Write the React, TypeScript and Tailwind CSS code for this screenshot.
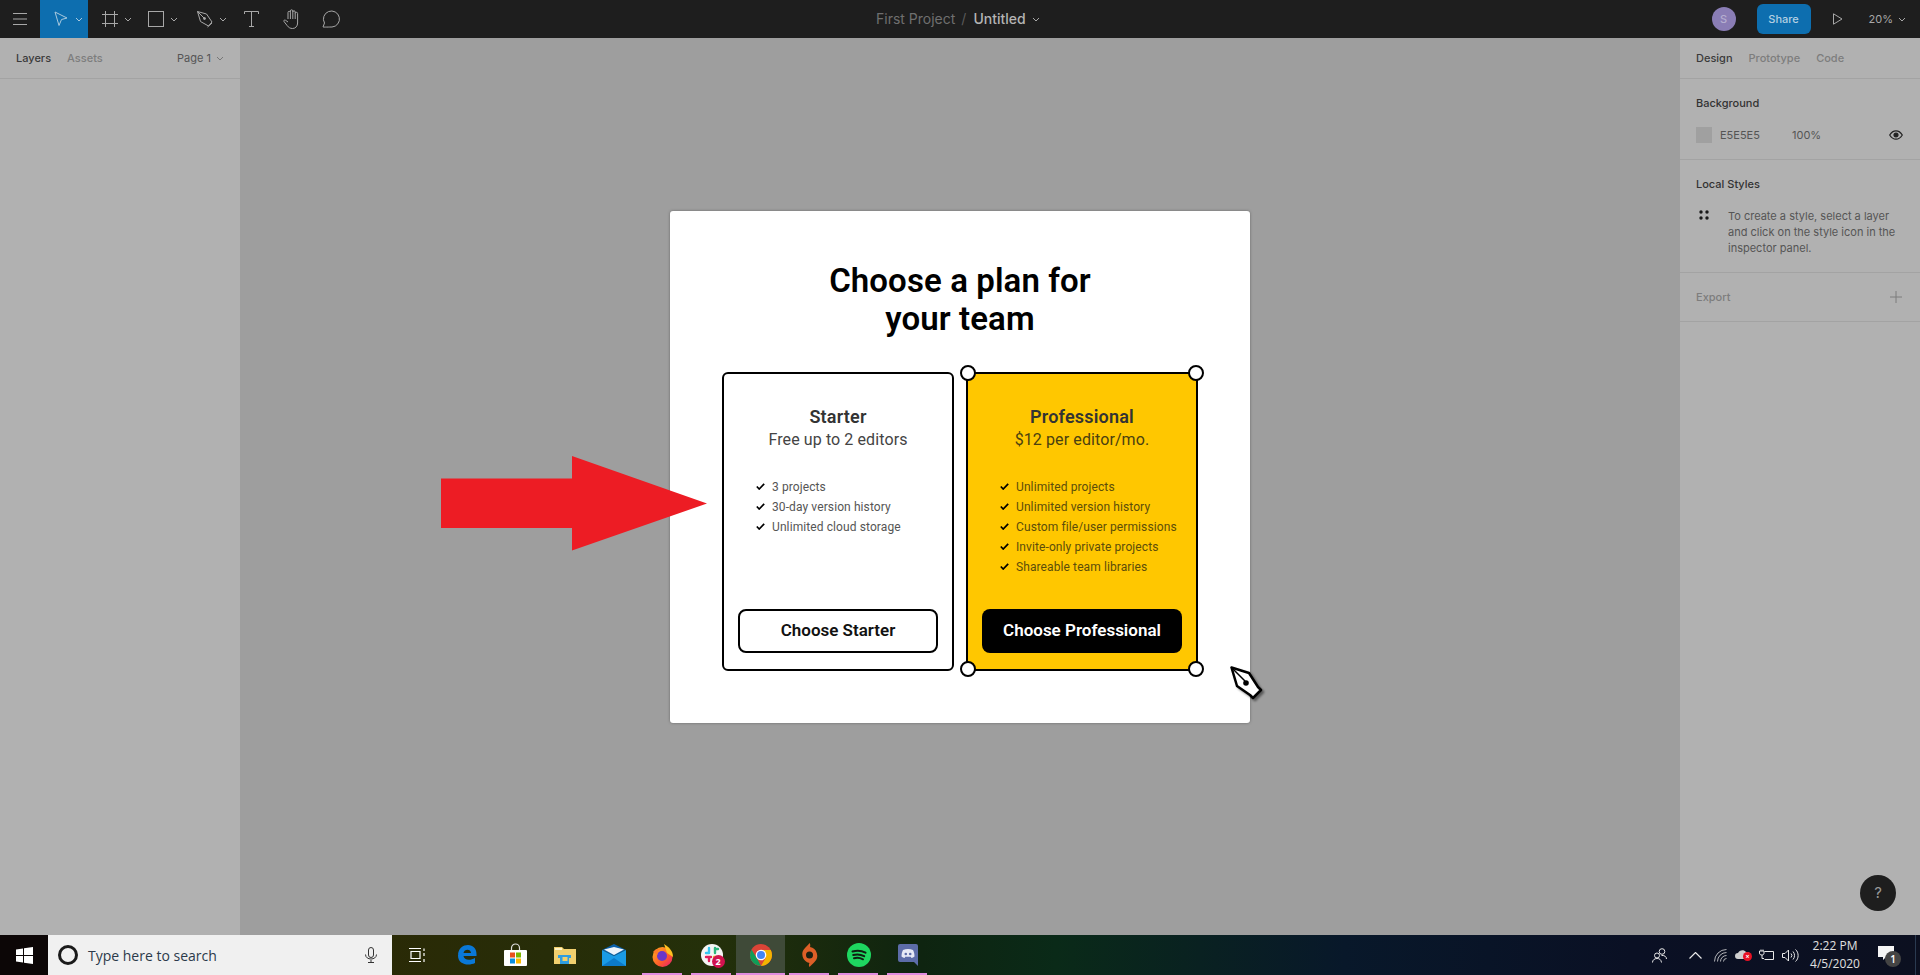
import React from "react";

const Chev = ({ c = "#a8a8a8", cls = "" }: { c?: string; cls?: string }) => (
  <svg width="8" height="5" viewBox="0 0 8 5" className={cls} fill="none">
    <path d="M1 1l3 3 3-3" stroke={c} strokeWidth="1" />
  </svg>
);

const TopBar = () => (
  <div className="h-[38px] bg-[#1e1e1e] flex items-center relative shrink-0 [font-family:Inter,sans-serif]">
    <div className="w-[40px] h-full flex items-center justify-center">
      <svg width="14" height="12" viewBox="0 0 14 12" fill="none" stroke="#a8a8a8"><path d="M0 .5h14M0 6h14M0 11.5h14" /></svg>
    </div>
    <div className="w-[48px] h-full bg-[#0d6eaf] flex items-center justify-center gap-[7px] pl-[8px]">
      <svg width="14" height="16" viewBox="0 0 14 16" fill="none" stroke="#a9c9de"><path d="M1 1l12 6-5.5 1.500L5 14.500z" /></svg>
      <Chev c="#a9c9de" />
    </div>
    <div className="w-[48px] h-full flex items-center justify-center gap-[6px] ml-[2px] pl-[6px]">
      <svg width="16" height="16" viewBox="0 0 16 16" fill="none" stroke="#a8a8a8"><path d="M3.500 0v16M12.500 0v16M0 3.500h16M0 12.500h16" /></svg>
      <Chev />
    </div>
    <div className="w-[48px] h-full flex items-center justify-center gap-[6px] pl-[2px]">
      <svg width="16" height="16" viewBox="0 0 16 16" fill="none" stroke="#a8a8a8"><rect x=".5" y=".5" width="15" height="15" /></svg>
      <Chev />
    </div>
    <div className="w-[48px] h-full flex items-center justify-center gap-[6px] pl-[4px]">
      <svg width="16" height="17" viewBox="0 0 16 17" fill="none" stroke="#a8a8a8"><path d="M.5.500l9 2.500 5.500 8-3.500 4-8-4.500zM.5.500l6.500 6.500" /><circle cx="7.500" cy="7.500" r="1" fill="#a8a8a8" /><path d="M10.500 16l4.500-4" /></svg>
      <Chev />
    </div>
    <div className="w-[40px] h-full flex items-center justify-center pr-[5px]">
      <svg width="15" height="16" viewBox="0 0 15 16" fill="none" stroke="#a8a8a8"><path d="M.5 3V.500h14V3M7.500.500v15M5 15.500h5" /></svg>
    </div>
    <div className="w-[38px] h-full flex items-center justify-center pr-[3px]">
      <svg width="18" height="20" viewBox="0 0 18 20" fill="none" stroke="#a8a8a8"><path d="M5 10V3.500a1.200 1.200 0 012.400 0V2a1.200 1.200 0 012.400 0v1a1.200 1.200 0 012.400 0v1.500a1.200 1.200 0 012.400 0V14c0 3-2 5.500-5 5.500-2.500 0-4-1-5.500-3L1 12.500c-.6-1 .6-2 1.600-1.200L5 13M7.400 3.500V10M9.800 3v7M12.200 4.500V10" /></svg>
    </div>
    <div className="w-[40px] h-full flex items-center justify-center pr-[2px]">
      <svg width="18" height="18" viewBox="0 0 18 18" fill="none" stroke="#a8a8a8"><path d="M1 17l1.500-4A8 8 0 1110 17c-2 0-9 .200-9 0z" /></svg>
    </div>
    <div className="absolute left-[876px] top-0 h-full flex items-center text-[14px] pb-[2px]">
      <span className="text-[#6f6f6f]">First Project</span>
      <span className="text-[#5a5a5a] ml-[6px] mr-[7px]">/</span>
      <span className="text-[#b4b4b4] font-medium">Untitled</span>
      <Chev cls="ml-[6px] mt-[2px]" />
    </div>
    <div className="ml-auto h-full flex items-center">
      <div className="w-[24px] h-[24px] rounded-full bg-[#8a7db5] text-[#b5aed0] text-[11px] font-medium flex items-center justify-center">S</div>
      <div className="w-[54px] h-[30px] ml-[21px] rounded-[6px] bg-[#0d6eaf] text-[#b3cfe2] text-[11px] font-medium flex items-center justify-center">Share</div>
      <svg width="10" height="12" viewBox="0 0 10 12" fill="none" stroke="#a8a8a8" className="ml-[22px]"><path d="M.5.800v10.400l8.500-5.200z" /></svg>
      <span className="text-[11px] text-[#a8a8a8] ml-[26px]">20%</span>
      <Chev cls="ml-[5px] mr-[14px]" />
    </div>
  </div>
);

const PanelTab = ({ on, children, cls = "" }: { on?: boolean; children: React.ReactNode; cls?: string }) => (
  <span className={`text-[11px] ${on ? "text-[#3a3a3a] font-medium" : "text-[#7d7d7d] font-medium"} ${cls}`}>{children}</span>
);

const LeftPanel = () => (
  <div className="w-[240px] bg-[#b1b1b1] shrink-0 [font-family:Inter,sans-serif]">
    <div className="h-[41px] pt-[1px] border-b border-[#a3a3a3] flex items-center pl-[16px]">
      <PanelTab on>Layers</PanelTab>
      <PanelTab cls="ml-[16px]">Assets</PanelTab>
      <span className="text-[11px] text-[#555] ml-auto">Page 1</span>
      <Chev c="#777" cls="ml-[5px] mr-[16px]" />
    </div>
  </div>
);

const RightPanel = () => (
  <div className="w-[240px] bg-[#b1b1b1] shrink-0 [font-family:Inter,sans-serif]">
    <div className="h-[41px] pt-[1px] border-b border-[#a3a3a3] flex items-center pl-[16px]">
      <PanelTab on>Design</PanelTab>
      <PanelTab cls="ml-[16px]">Prototype</PanelTab>
      <PanelTab cls="ml-[16px]">Code</PanelTab>
    </div>
    <div className="h-[81px] border-b border-[#a3a3a3] px-[16px]">
      <div className="text-[11px] font-medium text-[#333] pt-[16px] leading-[16px]">Background</div>
      <div className="flex items-center mt-[16px] h-[16px]">
        <div className="w-[16px] h-[16px] bg-[#a0a0a0]" />
        <span className="text-[11px] text-[#555] ml-[8px] w-[72px]">E5E5E5</span>
        <span className="text-[11px] text-[#555]">100%</span>
        <svg width="14" height="10" viewBox="0 0 14 10" className="ml-auto mr-[1px]" fill="none" stroke="#222" strokeWidth="1.200"><path d="M.7 5C2.500 2 4.500.800 7 .800S11.500 2 13.300 5C11.500 8 9.500 9.200 7 9.200S2.500 8 .7 5z" /><circle cx="7" cy="5" r="2" fill="#222" /></svg>
      </div>
    </div>
    <div className="h-[113px] border-b border-[#a3a3a3] px-[16px]">
      <div className="text-[11px] font-medium text-[#333] pt-[16px] leading-[16px]">Local Styles</div>
      <div className="flex mt-[16px]">
        <svg width="10" height="10" viewBox="0 0 10 10" className="mt-[2px] ml-[3px]" fill="#1a1a1a"><circle cx="2" cy="2" r="1.700" /><circle cx="8" cy="2" r="1.700" /><circle cx="2" cy="8" r="1.700" /><circle cx="8" cy="8" r="1.700" /></svg>
        <p className="text-[11px] leading-[16px] text-[#555] ml-[19px] w-[170px]">To create a style, select a layer and click on the style icon in the inspector panel.</p>
      </div>
    </div>
    <div className="h-[49px] border-b border-[#a3a3a3] px-[16px] flex items-center justify-between">
      <span className="text-[11px] font-medium text-[#7d7d7d]">Export</span>
      <svg width="12" height="12" viewBox="0 0 12 12" stroke="#7d7d7d" className="mr-[2px]"><path d="M6 0v12M0 6h12" /></svg>
    </div>
  </div>
);

const Check = () => (
  <svg width="9" height="7" viewBox="0 0 9 7" fill="none" stroke="#000" strokeWidth="1.700" className="shrink-0 -translate-y-px"><path d="M.8 3.500L3.200 6 8.200.8" /></svg>
);

const Plan = ({ name, sub, items, btn, pro }: { name: string; sub: string; items: string[]; btn: string; pro?: boolean }) => (
  <div className={`relative w-[232px] h-[299px] border-2 border-black flex flex-col ${pro ? "bg-[#ffc700]" : "bg-white rounded-[6px]"}`}>
    <div className="text-center pt-[31px] text-[18px] leading-[24px] font-semibold text-[#333] tracking-[0.2px]">{name}</div>
    <div className={`text-center text-[16px] leading-[22px] tracking-[0.1px] ${pro ? "text-[#4a4010]" : "text-[#444]"}`}>{sub}</div>
    <ul className="mt-[28px] pl-[32px] flex flex-col gap-[4px]">
      {items.map((t) => (
        <li key={t} className={`flex items-center h-[16px] text-[12px] tracking-[0.1px] ${pro ? "text-[#5c4d0a]" : "text-[#555]"}`}>
          <Check />
          <span className="ml-[7px]">{t}</span>
        </li>
      ))}
    </ul>
    <div className={`absolute left-[14px] top-[235px] w-[200px] h-[44px] rounded-[8px] flex items-center justify-center text-[17px] font-semibold ${pro ? "bg-black text-white" : "bg-white border-2 border-black text-[#111]"}`}>{btn}</div>
    {pro && (
      <>
        <div className="absolute left-[-8px] top-[-9px] w-[16px] h-[16px] rounded-full bg-white border-2 border-black" />
        <div className="absolute right-[-8px] top-[-9px] w-[16px] h-[16px] rounded-full bg-white border-2 border-black" />
        <div className="absolute left-[-8px] bottom-[-8px] w-[16px] h-[16px] rounded-full bg-white border-2 border-black" />
        <div className="absolute right-[-8px] bottom-[-8px] w-[16px] h-[16px] rounded-full bg-white border-2 border-black" />
      </>
    )}
  </div>
);

const Canvas = () => (
  <div className="flex-1 relative bg-[#9e9e9e] flex justify-center pt-[173px] [font-family:Roboto,sans-serif]">
    <div className="w-[580px] h-[512px] bg-white rounded-[3px] shadow-[0_0_3px_rgba(0,0,0,0.35)] flex flex-col pl-[52px]">
      <h1 className="text-center w-[476px] pt-[51px] text-[33px] leading-[38px] font-semibold text-black tracking-[0.1px]">Choose a plan for<br />your team</h1>
      <div className="flex gap-[12px] mt-[34px]">
        <Plan name="Starter" sub="Free up to 2 editors" items={["3 projects", "30-day version history", "Unlimited cloud storage"]} btn="Choose Starter" />
        <Plan pro name="Professional" sub="$12 per editor/mo." items={["Unlimited projects", "Unlimited version history", "Custom file/user permissions", "Invite-only private projects", "Shareable team libraries"]} btn="Choose Professional" />
      </div>
    </div>
    <svg width="267" height="95" viewBox="0 0 267 95" className="absolute left-[201px] top-[418px]" fill="#ed1c24"><path d="M0 22.500h131V0l135 47.500L131 94.500V72H0z" /></svg>
    <svg width="34" height="38" viewBox="0 0 34 38" className="absolute left-[990px] top-[628px] drop-shadow-[2px_2px_1px_rgba(0,0,0,0.45)]"><path d="M1.500 1.500L19 7l9 14 3 3-8 8-3-3L7 20z" fill="#fff" stroke="#000" strokeWidth="2.500" strokeLinejoin="round" /><path d="M2 2l13 13" stroke="#000" strokeWidth="1.500" /><circle cx="16" cy="17" r="2.800" fill="#000" /></svg>
    <div className="absolute left-[1620px] top-[837px] w-[36px] h-[36px] rounded-full bg-[#1e1e1e] text-[#999] text-[15px] flex items-center justify-center [font-family:Inter,sans-serif]">?</div>
  </div>
);

const TaskIcon = ({ active, line = true, children }: { active?: boolean; line?: boolean; children: React.ReactNode }) => (
  <div className={`relative w-[49px] h-full flex items-center justify-center ${active ? "bg-[#3f4a38]" : ""}`}>
    {children}
    {line && <div className={`absolute bottom-0 h-[2px] bg-[#e08ce0] ${active ? "left-0 right-0" : "left-[4px] right-[5px]"}`} />}
  </div>
);

const Taskbar = () => (
  <div className="h-[40px] shrink-0 flex items-center bg-[linear-gradient(90deg,#0c0606_0%,#0c0606_3%,#2a2a06_20%,#24300a_37%,#0e2410_48%,#0a2a18_55%,#08182a_70%,#0a1024_85%,#0c1020_100%)] [font-family:'Open_Sans',sans-serif]">
    <div className="w-[48px] h-full flex items-center justify-center">
      <svg width="17" height="17" viewBox="0 0 17 17" fill="#fff"><path d="M0 2.400L7 1.400v6.600H0zM8 1.300L17 0v8H8zM0 9h7v6.600L0 14.600zM8 9h9v8l-9-1.300z" /></svg>
    </div>
    <div className="w-[344px] h-full bg-[#f0f0f0] flex items-center pl-[10px] text-[#333]">
      <div className="w-[20px] h-[20px] rounded-full border-[3px] border-[#1a1a1a]" />
      <span className="ml-[10px] text-[14px] text-[#2b3a4a]">Type here to search</span>
      <svg width="12" height="16" viewBox="0 0 12 16" fill="none" stroke="#333" className="ml-auto mr-[15px]"><rect x="3.500" y=".5" width="5" height="10" rx="2.500" /><path d="M.5 7.500c0 6 11 6 11 0M6 13v2.500M3 15.500h6" /></svg>
    </div>
    <div className="w-[50px] h-full flex items-center justify-center">
      <svg width="17" height="14" viewBox="0 0 17 14" fill="none" stroke="#fff"><path d="M0 .5h12M0 13.500h12M2 3.500h9v7H2zM15 .5v2.500M15 5v3M15 11v3" strokeWidth="1.200" /></svg>
    </div>
    <TaskIcon line={false}>
      <svg width="20" height="20" viewBox="0 0 20 20"><path d="M1 9C2 3 6 0 11 0c5 0 8.500 3.500 8.500 9v2H6.500c.3 4 6.500 5 11.500 2v5c-6 3-17 2-17-7.500 0-3 2-6.500 5.500-8C5 4 3.500 6 1 9zM6.500 8h7.500c0-4.500-7-4.500-7.500 0z" fill="#0a78d7" /></svg>
    </TaskIcon>
    <TaskIcon line={false}>
      <svg width="23" height="24" viewBox="0 0 23 24"><path d="M7.500 7V5a4 4 0 018 0v2" fill="none" stroke="#ddd" strokeWidth="1.200" /><rect y="7" width="23" height="16" rx="1" fill="#fff" /><rect x="6" y="9.500" width="5" height="5" fill="#e9501f" /><rect x="12" y="9.500" width="5" height="5" fill="#7db600" /><rect x="6" y="15.500" width="5" height="5" fill="#0a8ee0" /><rect x="12" y="15.500" width="5" height="5" fill="#fdb900" /></svg>
    </TaskIcon>
    <TaskIcon line={false}>
      <svg width="22" height="19" viewBox="0 0 22 19"><path d="M0 1h8l2 2h12v15H0z" fill="#f0cf6e" /><path d="M1 2h7v2H1z" fill="#fff3c4" /><path d="M4 9h13v3h-2v6H6v-6H4z" fill="#2f9de0" /><rect x="8.500" y="11" width="5" height="4" fill="#f0cf6e" /></svg>
    </TaskIcon>
    <TaskIcon line={false}>
      <svg width="24" height="22" viewBox="0 0 24 22"><path d="M0 6L12 0l12 6-12 6z" fill="#0a5fa8" /><path d="M0 6l12 6 12-6v16H0z" fill="#1a9be6" /><path d="M2 5.500L12 3l10 2.500-10 5.500z" fill="#eef4fa" /><path d="M0 22l12-8 12 8z" fill="#0c7ac9" /></svg>
    </TaskIcon>
    <TaskIcon>
      <svg width="23" height="23" viewBox="0 0 23 23"><defs><linearGradient id="ff" x1="0" y1="0" x2="1" y2="1"><stop offset="0" stopColor="#ffb51e" /><stop offset=".6" stopColor="#ff5a2c" /><stop offset="1" stopColor="#e5177a" /></linearGradient></defs><circle cx="11.500" cy="13" r="10" fill="url(#ff)" /><path d="M13 0c5 3 9 7 9 13l-6-4z" fill="#ffc020" /><circle cx="11" cy="12" r="5" fill="#6a37c8" /><path d="M2 8c2-3 5-4 8-3-3 1-4 3-3.500 6z" fill="#ff7a28" /></svg>
    </TaskIcon>
    <TaskIcon>
      <div className="relative">
        <svg width="22" height="22" viewBox="0 0 22 22"><circle cx="11" cy="11" r="11" fill="#f5f5f5" /><path d="M8 4v5M5 9h3" stroke="#36c5f0" strokeWidth="2.400" strokeLinecap="round" /><path d="M14 4v5M14 5h3" stroke="#2eb67d" strokeWidth="2.400" strokeLinecap="round" /><path d="M5 13h5M8 13v4" stroke="#e01e5a" strokeWidth="2.400" strokeLinecap="round" /><path d="M13 13h4" stroke="#ecb22e" strokeWidth="2.400" strokeLinecap="round" /></svg>
        <div className="absolute left-[11px] top-[11px] w-[13px] h-[13px] rounded-full bg-[#d1124f] text-white text-[9px] font-bold leading-[13px] text-center">2</div>
      </div>
    </TaskIcon>
    <TaskIcon active>
      <svg width="22" height="22" viewBox="0 0 22 22"><circle cx="11" cy="11" r="11" fill="#db4437" /><path d="M11 22a11 11 0 01-9.500-16.500L7 14.500l4 7.500z" fill="#0f9d58" /><path d="M22 11A11 11 0 0111 22l4.800-8.200L12 6h8.800c.8 1.500 1.200 3.200 1.200 5z" fill="#f4b400" /><circle cx="11" cy="11" r="5.300" fill="#fff" /><circle cx="11" cy="11" r="4" fill="#4285f4" /></svg>
    </TaskIcon>
    <TaskIcon>
      <svg width="19" height="24" viewBox="0 0 19 24"><path d="M9.500 0c1 1.500 1 2.500.5 4a8.800 8.800 0 014.500 15c-1.500 1.800-3.500 3-5 5-.8-1.500-.8-2.700 0-4a8.800 8.800 0 01-4.500-15C6.500 3 8.500 1.800 9.500 0z" fill="#dd5f27" /><circle cx="9.500" cy="12" r="3.500" fill="#1a2012" /></svg>
    </TaskIcon>
    <TaskIcon>
      <svg width="24" height="24" viewBox="0 0 24 24"><circle cx="12" cy="12" r="12" fill="#1ed760" /><path d="M5.500 8.500c4-1.200 9-1 13 1.200M6.200 12c3.500-1 7.500-.7 11 1.200M7 15.300c3-.8 6-.5 9 1" fill="none" stroke="#0f1f12" strokeWidth="2" strokeLinecap="round" /></svg>
    </TaskIcon>
    <TaskIcon>
      <svg width="20" height="22" viewBox="0 0 20 22"><path d="M2 0h16a2 2 0 012 2v20l-4-4H2a2 2 0 01-2-2V2a2 2 0 012-2z" fill="#5c6ca8" /><path d="M5 6c3-1.300 7-1.300 10 0 1 2 1.500 4 1.500 6.500-1 .8-2 1.200-3 1.500l-.8-1.200H7.300L6.500 14c-1-.3-2-.7-3-1.500C3.500 10 4 8 5 6z" fill="#e6e9f5" /><circle cx="7.800" cy="10" r="1.300" fill="#5c6ca8" /><circle cx="12.200" cy="10" r="1.300" fill="#5c6ca8" /></svg>
    </TaskIcon>
    <div className="ml-auto h-full flex items-center text-[#e8e8e8]">
      <svg width="15" height="15" viewBox="0 0 15 15" fill="none" stroke="#e8e8e8"><circle cx="10" cy="3.500" r="2.800" /><circle cx="5" cy="7.500" r="2.500" /><path d="M.5 14.500c0-2.500 2-4 4.500-4s4 1 4.500 4M9.500 7.500c2.500-.5 5 1 5 3.500" /></svg>
      <svg width="13" height="7" viewBox="0 0 13 7" fill="none" stroke="#e8e8e8" strokeWidth="1.200" className="ml-[22px]"><path d="M.5 6.500l6-6 6 6" /></svg>
      <svg width="13" height="13" viewBox="0 0 13 13" fill="none" stroke="#ddd" className="ml-[12px]"><path d="M.5 12.500A12 12 0 0112.500.5M3.500 12.500a9 9 0 019-9M6.500 12.500a6 6 0 016-6M9.500 12.500a3 3 0 013-3" opacity=".8" /></svg>
      <div className="relative w-[16px] h-[12px] ml-[8px]">
        <svg width="16" height="10" viewBox="0 0 16 10" fill="#cfcfcf"><path d="M3 10a3 3 0 010-6c1-3 6-4 8-1 3-.5 5 1.500 5 4a3 3 0 01-2 3z" /></svg>
        <div className="absolute left-[8px] top-[3px] w-[9px] h-[9px] rounded-full bg-[#e81123] text-white text-[7px] leading-[9px] text-center font-bold">×</div>
      </div>
      <svg width="15" height="12" viewBox="0 0 15 12" fill="none" stroke="#e8e8e8" className="ml-[8px]"><path d="M5.500 2.500h9v8h-9" /><path d="M14 4.500h1v4" /><path d="M.5 2v2c0 1.500 1 2 2.500 2s2-1 2-2V2zM2 .5V2M4 .5V2M3 6v3.500h2" /></svg>
      <svg width="17" height="13" viewBox="0 0 17 13" fill="none" stroke="#e8e8e8" className="ml-[8px]"><path d="M.5 4.500h2.500L6.500 1v11L3 8.500H.5zM9 4.500a3 3 0 010 4M11 2.500a6 6 0 010 8M13.500.5c3.500 3 3.500 9 0 12" /></svg>
      <div className="w-[62px] ml-[5px] text-center text-[12px] leading-[18px] text-[#e0e0e0]">
        <div>2:22 PM</div>
        <div>4/5/2020</div>
      </div>
      <div className="relative w-[18px] h-[18px] ml-[12px] mr-[19px]">
        <svg width="16" height="15" viewBox="0 0 16 15" fill="#f5f5f5"><path d="M0 0h16v11h-8l-3 3v-3H0z" /></svg>
        <div className="absolute left-[7px] top-[5px] w-[16px] h-[16px] rounded-full bg-[#444] text-white text-[10px] leading-[16px] text-center font-semibold">1</div>
      </div>
      <div className="w-[1px] h-full bg-[#2a3a50] mr-[4px]" />
    </div>
  </div>
);

export default function App() {
  return (
    <div className="w-[1920px] h-[975px] flex flex-col overflow-hidden">
      <TopBar />
      <div className="flex-1 flex min-h-0">
        <LeftPanel />
        <Canvas />
        <RightPanel />
      </div>
      <Taskbar />
    </div>
  );
}
